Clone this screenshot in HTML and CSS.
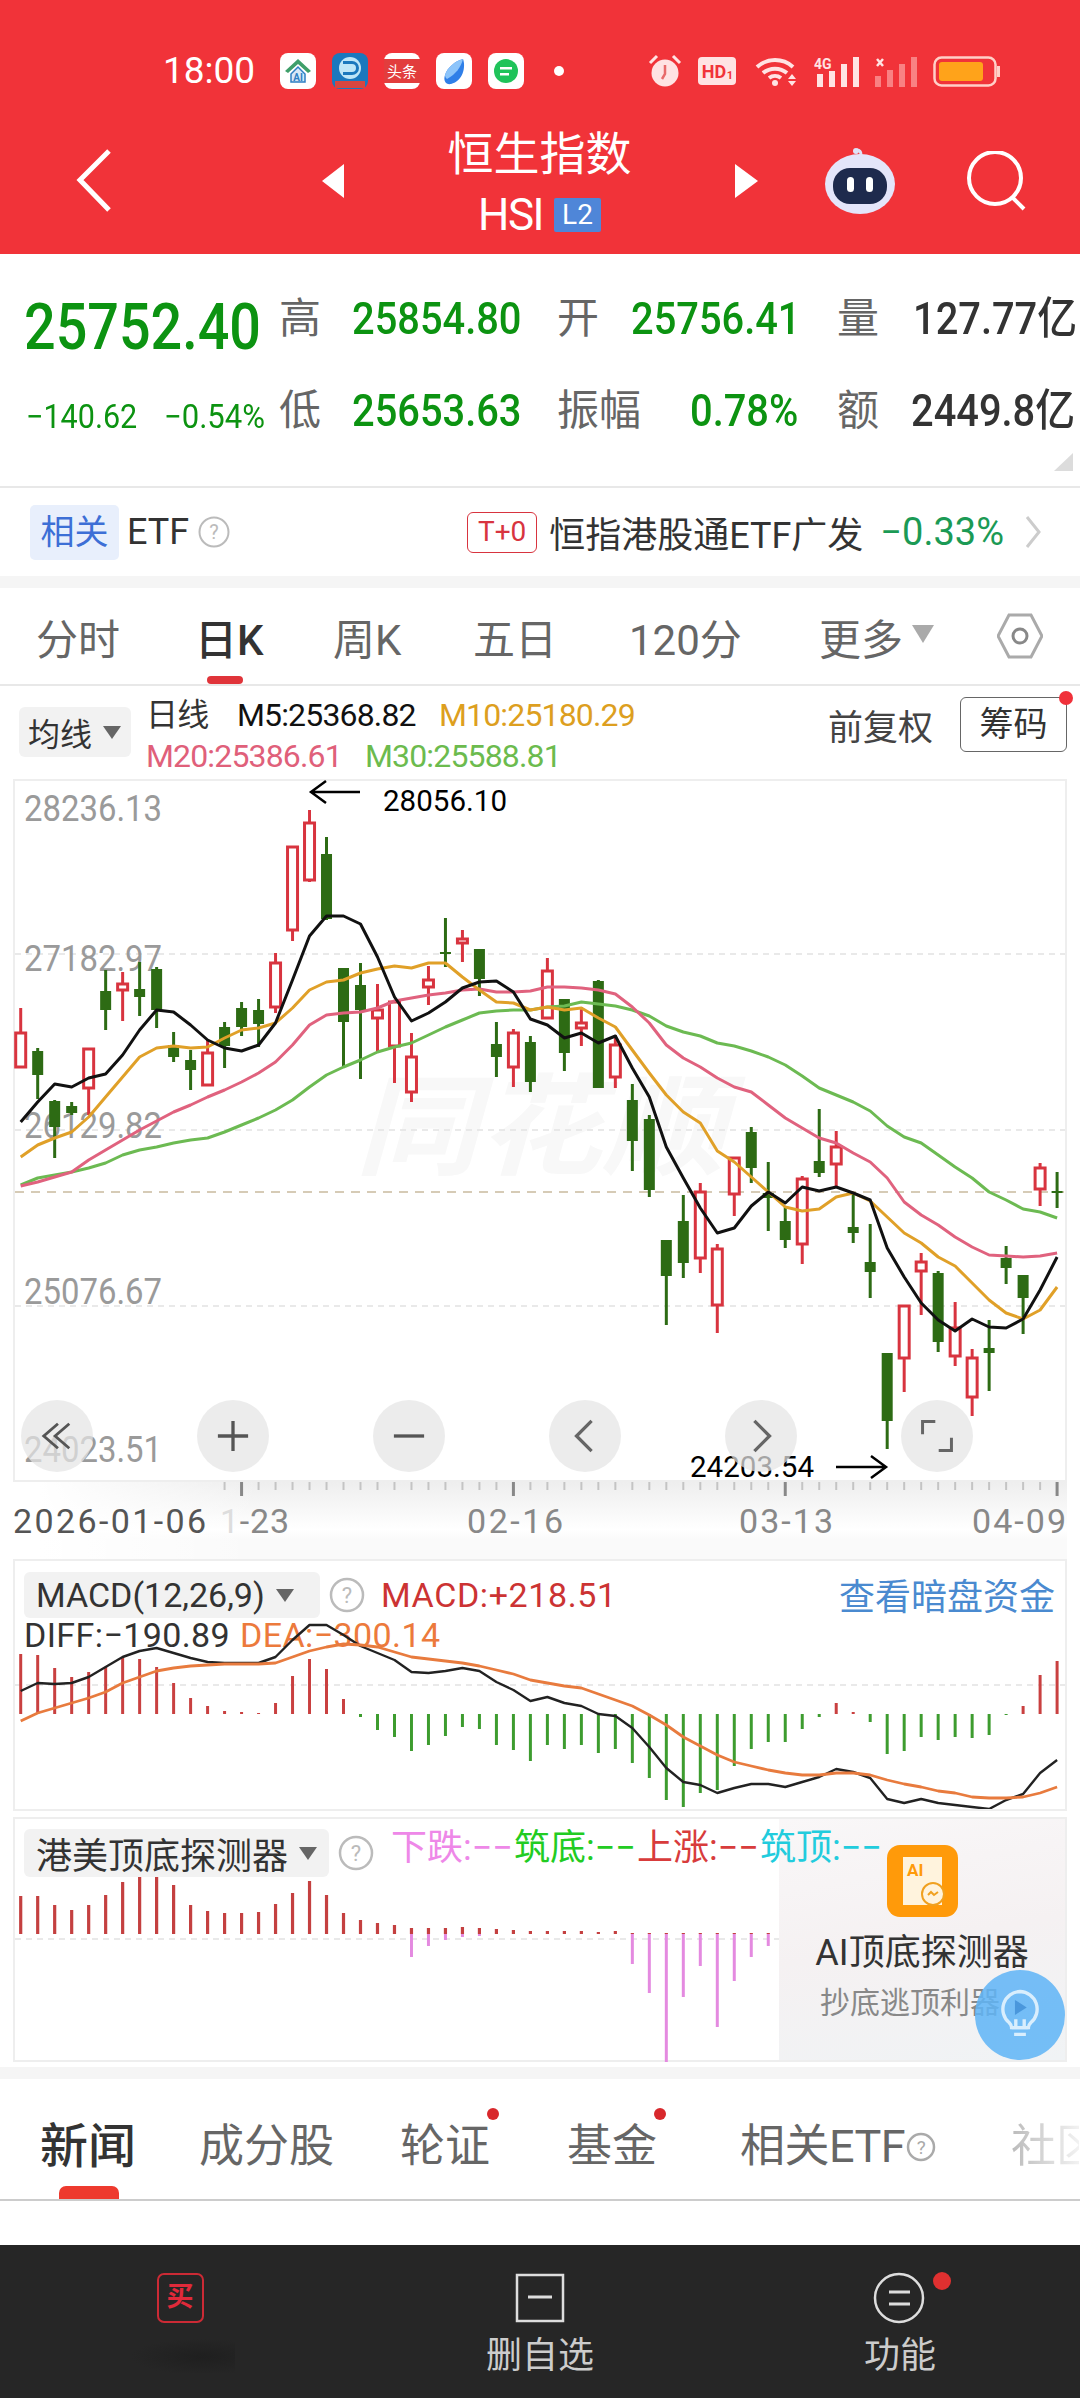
FILE: index.html
```html
<!DOCTYPE html>
<html lang="zh">
<head>
    <meta charset="UTF-8">
    <meta name="viewport" content="width=device-width, initial-scale=1.0">
    <title>恒生指数</title>
    <link rel="stylesheet" href="styles.css">
</head>
<body>
    <header class="top">
        <div class="status">
            <span class="time">18:00</span>
            <svg class="app" viewBox="0 0 36 36"><rect width="36" height="36" rx="8" fill="#fff"/><path d="M5 18 18 6l13 12-3 2-10-9-10 9z" fill="#3f9f6a"/><path d="M11 21l7-7 7 7v8H11z" fill="#d7e8f7" stroke="#2f7fc4" stroke-width="1.5"/><text x="18" y="28" font-size="10" font-weight="700" fill="#2f7fc4" text-anchor="middle">AI</text></svg>
            <svg class="app" viewBox="0 0 36 36"><rect width="36" height="36" rx="8" fill="#1b78bd"/><circle cx="18" cy="15" r="11" fill="#bfe6f7"/><path d="M11 8h9a7 7 0 0 1 0 14h-9v-3h9a4 4 0 0 0 0-8h-9z" fill="#1b78bd"/><rect x="3" y="28" width="30" height="7" fill="#d9453f"/></svg>
            <svg class="app" viewBox="0 0 36 36"><rect width="36" height="36" rx="8" fill="#fff"/><rect y="6" width="36" height="24" fill="#e23d3d"/><text x="18" y="24" font-size="15" fill="#fff" text-anchor="middle">头条</text></svg>
            <svg class="app" viewBox="0 0 36 36"><rect width="36" height="36" rx="8" fill="#fff"/><path d="M27 6c3 8 0 22-12 25-5 1-8-3-6-9C11 15 19 8 27 6z" fill="#2f7fe8"/><path d="M27 6c-2 8-7 15-16 20-1-1-2-2-2-4C11 15 19 8 27 6z" fill="#8cc4fa"/></svg>
            <svg class="app" viewBox="0 0 36 36"><rect width="36" height="36" rx="8" fill="#fff"/><circle cx="18" cy="18" r="12" fill="#1fc35a"/><rect x="12" y="14" width="12" height="2.5" fill="#fff"/><rect x="12" y="20" width="9" height="2.5" fill="#fff"/></svg>
            <i class="status-dot"></i>
            <svg class="st-alarm" viewBox="0 0 34 34"><circle cx="17" cy="19" r="13.5" fill="#ffe3e3"/><path d="M2 9 9 2M32 9 25 2" stroke="#ffe3e3" stroke-width="3"/><path d="M17 11v9l-3 5" stroke="#e86a6a" stroke-width="2.5" fill="none"/></svg>
            <svg class="st-hd" viewBox="0 0 38 28"><rect width="38" height="28" rx="4" fill="#ffe3e3"/><text x="16" y="21" font-size="18" font-weight="700" fill="#f13339" text-anchor="middle">HD</text><text x="32" y="22" font-size="11" font-weight="700" fill="#f13339" text-anchor="middle">1</text></svg>
            <svg class="st-wifi" viewBox="0 0 45 30"><path d="M2 11a27 27 0 0 1 36 0M8 17a19 19 0 0 1 24 0M14 22a10 10 0 0 1 12 0" fill="none" stroke="#ffe3e3" stroke-width="4"/><circle cx="20" cy="27" r="3" fill="#ffe3e3"/><path d="M37 18l4 5h-8zM33 25h8l-4 5z" fill="#ffe3e3"/></svg>
            <svg class="st-sig" viewBox="0 0 47 31"><text x="0" y="13" font-size="14" font-weight="700" fill="#ffe3e3">4G</text><g fill="#ffe3e3"><rect x="3" y="18" width="6" height="13"/><rect x="15" y="15" width="6" height="16"/><rect x="27" y="8" width="6" height="23"/><rect x="39" y="1" width="6" height="30"/></g></svg>
            <svg class="st-sig2" viewBox="0 0 44 31"><path d="M3 3l6 7M9 3l-6 7" stroke="#ffe3e3" stroke-width="2.5"/><g fill="#ffb5b5" opacity=".6"><rect x="1" y="20" width="6" height="11"/><rect x="13" y="14" width="6" height="17"/><rect x="25" y="8" width="6" height="23"/><rect x="37" y="1" width="6" height="30"/></g></svg>
            <svg class="st-batt" viewBox="0 0 67 31"><rect x="1.5" y="1.5" width="61" height="28" rx="7" fill="none" stroke="#ffd0c8" stroke-width="2.5"/><rect x="6" y="6" width="44" height="19" rx="3" fill="#ffa31a"/><rect x="64" y="10" width="3" height="11" fill="#ffd0c8"/></svg>
        </div>
        <nav class="nav">
            <svg class="back" viewBox="0 0 36 63"><path d="M33 2 4 31l29 30" fill="none" stroke="#fff" stroke-width="5"/></svg>
            <svg class="tri-l" viewBox="0 0 22 34"><path d="M22 0v34L0 17z" fill="#fff"/></svg>
            <div class="title">
                <div class="title-name">恒生指数</div>
                <div class="title-code"><span>HSI</span><b class="l2">L2</b></div>
            </div>
            <svg class="tri-r" viewBox="0 0 23 34"><path d="M0 0v34l23-17z" fill="#fff"/></svg>
            <svg class="robot" viewBox="0 0 70 66"><path d="M36 7c0-3-1-5-4-5" stroke="#dfe2f7" stroke-width="3" fill="none"/><circle cx="31" cy="3" r="3" fill="#dfe2f7"/><ellipse cx="35" cy="36" rx="35" ry="30" fill="#e4e5fa"/><rect x="8" y="20" width="54" height="36" rx="17" fill="#1e2a4d"/><rect x="22" y="29" width="7" height="15" rx="3.5" fill="#fff"/><rect x="41" y="29" width="7" height="15" rx="3.5" fill="#fff"/></svg>
            <svg class="search" viewBox="0 0 60 60"><circle cx="29" cy="27" r="26" fill="none" stroke="#fff" stroke-width="4"/><path d="M46 46l12 12" stroke="#fff" stroke-width="4"/></svg>
        </nav>
    </header>

    <section class="quote">
        <div class="price"><b class="squeeze-lg">25752.40</b></div>
        <span class="lab">高</span><span class="val squeeze">25854.80</span>
        <span class="lab">开</span><span class="val squeeze">25756.41</span>
        <span class="lab">量</span><span class="val dark squeeze">127.77亿</span>

        <div class="change"><span class="chg-abs">−140.62</span><span class="chg-pct">−0.54%</span></div>
        <span class="lab">低</span><span class="val squeeze">25653.63</span>
        <span class="lab">振幅</span><span class="val amp squeeze">0.78%</span>
        <span class="lab">额</span><span class="val dark total squeeze">2449.8亿</span>
        <svg class="corner" viewBox="0 0 19 18"><path d="M19 0v18H0z" fill="#dcdcdc"/></svg>
    </section>

    <section class="etf">
        <span class="etf-tag">相关</span>
        <span class="etf-label">ETF</span>
        <svg class="q q-etf" viewBox="0 0 32 32"><circle cx="16" cy="16" r="14.5" fill="none" stroke="#bbb" stroke-width="2"/><text x="16" y="23" font-size="20" fill="#bbb" text-anchor="middle">?</text></svg>
        <span class="etf-t0">T+0</span>
        <span class="etf-name">恒指港股通ETF广发</span>
        <span class="etf-pct">−0.33%</span>
        <svg class="etf-arrow" viewBox="0 0 16 32"><path d="M2 1l12 15L2 31" fill="none" stroke="#ccc" stroke-width="3"/></svg>
    </section>
    <div class="band"></div>

    <section class="periods">
        <span>分时</span>
        <span class="on">日K</span>
        <span>周K</span>
        <span>五日</span>
        <span>120分</span>
        <span class="more">更多<i class="caret caret-more"></i></span>
        <svg class="hex" viewBox="0 0 46 46"><path d="M12 2h22l11 21-11 21H12L1 23z" fill="none" stroke="#aaa" stroke-width="3"/><circle cx="23" cy="23" r="7" fill="none" stroke="#888" stroke-width="3"/></svg>
    </section>

    <section class="chart-head">
        <div class="chip chip-ma">均线<i class="caret"></i></div>
        <div class="legend">
            <div class="legend-row"><span class="lg-day">日线</span><span class="lg-m5">M5:25368.82</span><span class="lg-m10">M10:25180.29</span></div>
            <div class="legend-row"><span class="lg-m20">M20:25386.61</span><span class="lg-m30">M30:25588.81</span></div>
        </div>
        <span class="adjust">前复权</span>
        <span class="chips-btn">筹码</span>
    </section>

    <section class="box box-k">
        <svg id="kChart" class="k-svg" viewBox="15 781 1050 699" width="1050" height="699">
            <text class="watermark" x="355" y="1166" textLength="370" lengthAdjust="spacingAndGlyphs">同花顺</text>
            <g class="grid">
                <line x1="15" x2="1065" y1="954" y2="954"/>
                <line x1="15" x2="1065" y1="1130" y2="1130"/>
                <line x1="15" x2="1065" y1="1306" y2="1306"/>
            </g>
            <line class="last-close" x1="15" x2="1065" y1="1192" y2="1192"/>
            <g class="price-axis">
                <text x="24" y="821" textLength="138" lengthAdjust="spacingAndGlyphs">28236.13</text>
                <text x="24" y="971" textLength="138" lengthAdjust="spacingAndGlyphs">27182.97</text>
                <text x="24" y="1138" textLength="138" lengthAdjust="spacingAndGlyphs">26129.82</text>
                <text x="24" y="1304" textLength="138" lengthAdjust="spacingAndGlyphs">25076.67</text>
                <text x="24" y="1462" textLength="138" lengthAdjust="spacingAndGlyphs">24023.51</text>
            </g>
            <g id="kCandles"></g>
            <g class="marks">
                <path d="M360 792h-48m14-11-15 11 15 11" fill="none" stroke="#000" stroke-width="2.5"/>
                <text x="383" y="811" textLength="124" lengthAdjust="spacingAndGlyphs">28056.10</text>
                <text x="690" y="1477" textLength="124" lengthAdjust="spacingAndGlyphs">24203.54</text>
                <path d="M836 1467h50m-15-11 15 11-15 11" fill="none" stroke="#000" stroke-width="2.5"/>
            </g>
        </svg>
        <div class="zoom-btns">
            <span><svg viewBox="0 0 36 36"><path d="M19 5 4 18l15 13M31 5 16 18l15 13" fill="none" stroke="#555" stroke-width="3"/></svg></span>
            <span><svg viewBox="0 0 36 36"><path d="M18 2v32M2 18h32" fill="none" stroke="#555" stroke-width="3.5"/></svg></span>
            <span><svg viewBox="0 0 36 36"><path d="M2 18h32" fill="none" stroke="#555" stroke-width="3.5"/></svg></span>
            <span><svg viewBox="0 0 36 36"><path d="M25 2 9 18l16 16" fill="none" stroke="#666" stroke-width="3.5"/></svg></span>
            <span><svg viewBox="0 0 36 36"><path d="M11 2l16 16-16 16" fill="none" stroke="#666" stroke-width="3.5"/></svg></span>
            <span><svg viewBox="0 0 40 40"><path d="M18 3H3v15M22 37h15V22" fill="none" stroke="#666" stroke-width="3.5"/></svg></span>
        </div>
    </section>

    <section class="time-axis">
        <svg id="axis" viewBox="0 1482 1080 77" width="1080" height="77">
            <g id="axisTicks"></g>
            <text class="d-first" x="13" y="1533" textLength="193" lengthAdjust="spacing">2026-01-06</text>
            <text class="d-date" x="220" y="1533" textLength="69" lengthAdjust="spacing"><tspan class="d-fade">1</tspan>-23</text>
            <text class="d-date" x="467" y="1533" textLength="96" lengthAdjust="spacing">02-16</text>
            <text class="d-date" x="739" y="1533" textLength="94" lengthAdjust="spacing">03-13</text>
            <text class="d-date" x="972" y="1533" textLength="94" lengthAdjust="spacing">04-09</text>
        </svg>
    </section>

    <section class="box box-macd">
        <div class="ind-row">
            <div class="chip chip-macd">MACD(12,26,9)<i class="caret"></i></div>
            <svg class="q q-ind" viewBox="0 0 36 36"><circle cx="18" cy="18" r="16" fill="none" stroke="#bbb" stroke-width="2.5"/><text x="18" y="26" font-size="22" fill="#bbb" text-anchor="middle">?</text></svg>
            <span class="macd-val">MACD:+218.51</span>
            <span class="dark-pool">查看暗盘资金</span>
        </div>
        <div class="diff-row"><span class="diff">DIFF:−190.89</span><span class="dea">DEA:−300.14</span></div>
        <svg id="macdChart" class="over-svg" viewBox="15 1561 1050 248" width="1050" height="248">
            <line class="grid-line" x1="15" x2="1065" y1="1685" y2="1685"/>
            <g id="macdBars"></g>
        </svg>
    </section>

    <section class="box box-ai">
        <svg id="aiChart" class="over-svg" viewBox="15 1819 1050 243" width="1050" height="243">
            <line class="grid-line" x1="15" x2="1065" y1="1939" y2="1939"/>
            <g id="aiBars"></g>
        </svg>
        <div class="ind-row ind-row-ai">
            <div class="chip chip-ai">港美顶底探测器<i class="caret"></i></div>
            <svg class="q q-ind" viewBox="0 0 36 36"><circle cx="18" cy="18" r="16" fill="none" stroke="#bbb" stroke-width="2.5"/><text x="18" y="26" font-size="22" fill="#bbb" text-anchor="middle">?</text></svg>
            <div class="signals">
                <span class="s-pink">下跌:−−</span>
                <span class="s-green">筑底:−−</span>
                <span class="s-red">上涨:−−</span>
                <span class="s-cyan">筑顶:−−</span>
            </div>
        </div>
        <div class="ai-card">
            <svg class="ai-icon" viewBox="0 0 71 72">
                <rect width="71" height="72" rx="13" fill="#ff9a0a"/>
                <rect x="16" y="12" width="39" height="48" fill="#fff3dd"/>
                <text x="20" y="31" font-size="17" font-weight="700" fill="#ff9a0a">AI</text>
                <circle cx="46" cy="49" r="11" fill="#fff3dd" stroke="#f0a020" stroke-width="2"/>
                <path d="M41 50l3-3 3 3 4-3" fill="none" stroke="#f0a020" stroke-width="2"/>
            </svg>
            <div class="ai-name">AI顶底探测器</div>
            <div class="ai-sub">抄底逃顶利器</div>
        </div>
        <div class="bulb">
            <svg viewBox="0 0 50 62"><path d="M25 3a21 21 0 0 0-13 37c2 2 3 3 3 6h20c0-3 1-4 3-6A21 21 0 0 0 25 3z" fill="none" stroke="#d9eefd" stroke-width="4"/><path d="M15 46h20M20 46V36M30 46V36M18 54h14" stroke="#d9eefd" stroke-width="4" fill="none"/><path d="M19 13l14 9-14 9z" fill="#4a97dc"/></svg>
        </div>
    </section>

    <div class="band band-low"></div>

    <section class="news-tabs">
        <span class="on">新闻</span>
        <span>成分股</span>
        <span class="dot">轮证</span>
        <span class="dot">基金</span>
        <span class="etf-tab">相关ETF<svg class="q q-tab" viewBox="0 0 30 30"><circle cx="15" cy="15" r="13" fill="none" stroke="#aaa" stroke-width="2.5"/><text x="15" y="22" font-size="19" fill="#aaa" text-anchor="middle">?</text></svg></span>
        <span class="fade">社区</span>
    </section>
    <div class="spacer"></div>

    <footer class="bar">
        <div class="bar-item">
            <span class="buy-icon">买</span>
            <i class="smudge"></i>
        </div>
        <div class="bar-item">
            <svg class="bar-icon" viewBox="0 0 50 50"><rect x="2" y="2" width="46" height="46" fill="none" stroke="#ddd" stroke-width="2.5"/><path d="M13 24h24" stroke="#ddd" stroke-width="3"/></svg>
            <span class="bar-label">删自选</span>
        </div>
        <div class="bar-item">
            <svg class="bar-icon bar-icon-round" viewBox="0 0 80 52"><circle cx="27" cy="26" r="24" fill="none" stroke="#ddd" stroke-width="2.5"/><path d="M17 20h21M17 32h21" stroke="#ddd" stroke-width="3"/><circle cx="70" cy="9" r="9" fill="#e03030"/></svg>
            <span class="bar-label">功能</span>
        </div>
    </footer>

    <script src="chart.js"></script>
</body>
</html>
```

FILE: styles.css
```css
* {
    box-sizing: border-box;
}
body {
    margin: 0;
    width: 1080px;
    height: 2400px;
    overflow: hidden;
    background: #fff;
    color: #333;
    font-family: Roboto, "Noto Sans CJK SC", sans-serif;
}
svg {
    display: block;
    flex: none;
}
i {
    font-style: normal;
}

/* top red header */
.top {
    height: 254px;
    background: #f13339;
    color: #fff;
}
.status {
    display: flex;
    align-items: center;
    height: 89px;
    padding: 53px 0 0 163px;
}
.time {
    width: 117px;
    font-size: 37px;
    line-height: 36px;
}
.app {
    width: 36px;
    height: 36px;
    margin-right: 16px;
}
.status-dot {
    width: 10px;
    height: 10px;
    margin-left: 14px;
    border-radius: 50%;
    background: #fff;
}
.st-alarm {
    width: 34px;
    height: 34px;
    margin-left: 84px;
}
.st-hd {
    width: 38px;
    height: 28px;
    margin-left: 16px;
}
.st-wifi {
    width: 45px;
    height: 30px;
    margin-left: 19px;
}
.st-sig {
    width: 47px;
    height: 31px;
    margin-left: 14px;
}
.st-sig2 {
    width: 44px;
    height: 31px;
    margin-left: 13px;
}
.st-batt {
    width: 67px;
    height: 31px;
    margin-left: 15px;
}
.nav {
    display: flex;
    align-items: center;
    height: 165px;
    padding: 18px 0 0 76px;
}
.back {
    width: 36px;
    height: 63px;
}
.tri-l {
    width: 22px;
    height: 34px;
    margin-left: 210px;
}
.tri-r {
    width: 23px;
    height: 34px;
}
.title {
    width: 391px;
    padding-top: 4px;
    text-align: center;
}
.title-name {
    font-size: 46px;
    line-height: 56px;
}
.title-code {
    display: flex;
    justify-content: center;
    align-items: center;
    gap: 11px;
    height: 50px;
    margin-top: 8px;
    font-size: 44px;
    line-height: 50px;
    letter-spacing: -1.5px;
}
.l2 {
    width: 47px;
    height: 34px;
    background: #4f86d8;
    border-radius: 2px;
    font-size: 28px;
    font-weight: 400;
    line-height: 34px;
    letter-spacing: 0;
}
.robot {
    width: 70px;
    height: 66px;
    margin-left: 67px;
}
.search {
    width: 60px;
    height: 60px;
    margin-left: 71px;
}

/* quote numbers */
.quote {
    position: relative;
    display: grid;
    grid-template-columns: 255px 72px 206px 73px 207px 75px 166px;
    grid-auto-rows: 92px;
    align-items: center;
    height: 234px;
    padding: 19px 0 0 24px;
    border-bottom: 2px solid #e8e8e8;
    white-space: nowrap;
}
.price {
    margin-top: 18px;
    color: #0c9311;
    font-size: 64px;
    line-height: 70px;
}
.squeeze-lg {
    display: inline-block;
    transform: scaleX(.87);
    transform-origin: left;
    font-weight: 500;
}
.squeeze {
    display: inline-block;
    transform: scaleX(.905);
    transform-origin: left;
}
.lab {
    color: #666;
    font-size: 42px;
    line-height: 48px;
}
.val {
    margin-left: 1px;
    color: #0c9311;
    font-size: 44px;
    font-weight: 500;
    line-height: 48px;
}
.dark {
    color: #333;
}
.amp {
    margin-left: 60px;
}
.total {
    margin-left: -1px;
}
.change {
    display: flex;
    margin: 12px 0 0 2px;
    color: #0c9311;
    font-size: 33px;
    line-height: 40px;
}
.change span {
    display: inline-block;
    transform-origin: left;
}
.chg-abs {
    width: 138px;
    transform: scaleX(.925);
}
.chg-pct {
    transform: scaleX(.94);
}
.corner {
    position: absolute;
    right: 7px;
    bottom: 15px;
    width: 19px;
    height: 18px;
}

/* related etf row */
.etf {
    display: flex;
    align-items: center;
    height: 88px;
    padding-left: 30px;
    white-space: nowrap;
}
.etf-tag {
    width: 89px;
    height: 55px;
    background: #e8effc;
    border-radius: 5px;
    color: #3d6fd6;
    font-size: 34px;
    line-height: 55px;
    text-align: center;
}
.etf-label {
    margin-left: 8px;
    font-size: 36px;
}
.q-etf {
    width: 32px;
    height: 32px;
    margin-left: 9px;
}
.etf-t0 {
    width: 70px;
    height: 41px;
    margin-left: auto;
    border: 1.5px solid #d8343f;
    border-radius: 6px;
    color: #d8343f;
    font-size: 28px;
    line-height: 38px;
    text-align: center;
}
.etf-name {
    margin-left: 12px;
    font-size: 36px;
}
.etf-pct {
    margin-left: 17px;
    color: #1b9a55;
    font-size: 38px;
}
.etf-arrow {
    width: 16px;
    height: 32px;
    margin: 0 39px 0 21px;
}
.band {
    height: 12px;
    background: #f5f5f5;
}

/* period tabs */
.periods {
    display: grid;
    grid-template-columns: 159px 138px 140px 156px 190px 177px 46px;
    align-items: center;
    height: 98px;
    padding-left: 36px;
    border-bottom: 2px solid #e8e8e8;
    color: #666;
    font-size: 42px;
    white-space: nowrap;
}
.periods span {
    position: relative;
    display: flex;
    align-items: center;
    height: 100%;
}
.periods .on {
    color: #333;
    font-weight: 500;
}
.periods .on::after {
    content: "";
    position: absolute;
    left: 12px;
    bottom: 0;
    width: 36px;
    height: 8px;
    border-radius: 4px;
    background: #e0343a;
}
.caret {
    display: inline-block;
    width: 0;
    height: 0;
    margin-left: 11px;
    border-top: 13px solid #666;
    border-left: 9px solid transparent;
    border-right: 9px solid transparent;
}
.caret-more {
    margin-top: -5px;
    margin-left: 9px;
    border-top: 18px solid #aaa;
    border-left-width: 11px;
    border-right-width: 11px;
}
.hex {
    width: 46px;
    height: 46px;
    margin-left: 1px;
}

/* chart header */
.chart-head {
    display: flex;
    height: 93px;
    padding: 21px 13px 0 19px;
    white-space: nowrap;
}
.chip {
    display: flex;
    align-items: center;
    background: #f2f2f2;
    border-radius: 6px;
    color: #333;
}
.chip-ma {
    width: 112px;
    height: 50px;
    padding-left: 9px;
    font-size: 32px;
}
.legend {
    margin: -12px 0 0 15px;
    font-size: 32px;
    letter-spacing: -.85px;
    line-height: 41px;
}
.legend-row {
    display: flex;
}
.lg-day {
    width: 91px;
    color: #333;
}
.lg-m5 {
    width: 202px;
    color: #111;
}
.lg-m10 {
    color: #dd9f1f;
}
.lg-m20 {
    width: 219px;
    color: #e0607a;
}
.lg-m30 {
    color: #6cbb4e;
}
.adjust {
    margin: -3px 0 0 auto;
    color: #444;
    font-size: 35px;
    line-height: 50px;
}
.chips-btn {
    position: relative;
    width: 107px;
    height: 55px;
    margin: -10px 0 0 27px;
    border: 1.5px solid #666;
    border-radius: 6px;
    font-size: 34px;
    line-height: 52px;
    text-align: center;
}
.chips-btn::after {
    content: "";
    position: absolute;
    top: -7px;
    right: -7px;
    width: 14px;
    height: 14px;
    border-radius: 50%;
    background: #f0313a;
}

/* chart boxes */
.box {
    position: relative;
    width: 1054px;
    margin-left: 13px;
    border: 2px solid #eee;
}
.box-k {
    height: 703px;
}
.k-svg {
    overflow: visible;
}
.k-svg text {
    font-family: Roboto, "Noto Sans CJK SC", sans-serif;
}
.watermark {
    fill: #f8f8f8;
    font-size: 110px;
    font-weight: 700;
    font-style: italic;
}
.grid line, .grid-line {
    stroke: #e2e2e2;
    stroke-width: 1.5;
    stroke-dasharray: 6 5;
}
.last-close {
    stroke: #c9bb9f;
    stroke-width: 1.5;
    stroke-dasharray: 9 7;
}
.price-axis text {
    fill: #9a9a9a;
    font-size: 36px;
}
.marks text {
    fill: #000;
    font-size: 30px;
}
.zoom-btns {
    position: absolute;
    left: 6px;
    top: 619px;
    display: flex;
    gap: 104px;
}
.zoom-btns span {
    display: flex;
    align-items: center;
    justify-content: center;
    width: 72px;
    height: 72px;
    border-radius: 50%;
    background: rgba(229, 229, 229, .72);
}
.zoom-btns svg {
    width: 34px;
    height: 34px;
}
.time-axis {
    height: 77px;
    background:
        linear-gradient(270deg, #fff 13px, transparent 13px),
        linear-gradient(90deg, #fff 40px, transparent 260px),
        linear-gradient(#eee, #fff 62%, #fafafa 75%);
}
#axis text {
    font-size: 34px;
}
.d-first {
    fill: #555;
}
.d-date {
    fill: #888;
}
.d-fade {
    fill: #ddd;
}
.box-macd {
    height: 252px;
}
.box-ai {
    height: 245px;
    margin-top: 6px;
}
.over-svg {
    position: absolute;
    left: 0;
    top: 0;
    z-index: 1;
    pointer-events: none;
}
.ind-row {
    display: flex;
    align-items: center;
    height: 57px;
    padding: 11px 0 0 9px;
    white-space: nowrap;
}
.chip-macd {
    width: 296px;
    height: 46px;
    padding-left: 12px;
    font-size: 34px;
}
.chip-macd .caret, .chip-ai .caret {
    border-top-color: #666;
}
.q-ind {
    width: 36px;
    height: 36px;
    margin-left: 9px;
}
.macd-val {
    margin-left: 16px;
    color: #cc3333;
    font-size: 34px;
    letter-spacing: .6px;
}
.dark-pool {
    margin: -2px 0 0 auto;
    padding-right: 10px;
    color: #4a8ad0;
    font-size: 36px;
}
.diff-row {
    display: flex;
    height: 34px;
    padding-left: 9px;
    font-size: 34px;
    line-height: 34px;
    letter-spacing: .4px;
    white-space: nowrap;
}
.diff {
    width: 216px;
}
.dea {
    color: #ec7a3c;
}

/* ai detector panel */
.ind-row-ai {
    position: relative;
    z-index: 2;
    padding-top: 10px;
    height: 58px;
}
.chip-ai {
    width: 305px;
    height: 48px;
    padding-left: 12px;
    font-size: 36px;
}
.signals {
    display: flex;
    margin: -10px 0 0 17px;
    font-size: 36px;
    line-height: 44px;
}
.signals span {
    width: 123px;
}
.s-pink {
    color: #ee88e8;
}
.s-green {
    color: #22cc22;
}
.s-red {
    color: #d83c3c;
}
.s-cyan {
    color: #22ccdd;
}
.ai-card {
    position: absolute;
    top: 0;
    right: 0;
    bottom: 0;
    z-index: 1;
    display: flex;
    flex-direction: column;
    align-items: center;
    width: 286px;
    padding-top: 26px;
    background: linear-gradient(170deg, #f9f7f8, #f5f1f2 50%, #f0f3f5);
}
.ai-icon {
    width: 71px;
    height: 72px;
}
.ai-name {
    margin-top: 16px;
    color: #333;
    font-size: 36px;
    line-height: 40px;
}
.ai-sub {
    margin: 12px 24px 0 0;
    color: #888;
    font-size: 30px;
    line-height: 36px;
}
.bulb {
    position: absolute;
    right: 0;
    bottom: 0;
    z-index: 3;
    display: flex;
    align-items: center;
    justify-content: center;
    width: 90px;
    height: 90px;
    border-radius: 50%;
    background: rgba(96, 180, 246, .86);
}
.bulb svg {
    width: 42px;
    height: 54px;
}
.band-low {
    margin-top: 5px;
}

/* news tabs */
.news-tabs {
    display: grid;
    grid-template-columns: 159px 201px 167px 173px 271px 68px;
    align-items: center;
    height: 122px;
    padding: 16px 0 0 40px;
    border-bottom: 2px solid #ccc;
    overflow: hidden;
    color: #666;
    font-size: 45px;
    line-height: 60px;
    white-space: nowrap;
}
.news-tabs span {
    position: relative;
    display: flex;
    align-items: center;
}
.news-tabs .on {
    color: #333;
    font-size: 48px;
    font-weight: 500;
}
.news-tabs .on::after {
    content: "";
    position: absolute;
    left: 19px;
    bottom: -22px;
    width: 60px;
    height: 13px;
    border-radius: 7px 7px 0 0;
    background: #ee3a2e;
}
.news-tabs .dot::after {
    content: "";
    position: absolute;
    top: -9px;
    left: 87px;
    width: 12px;
    height: 12px;
    border-radius: 50%;
    background: #d8282c;
}
.etf-tab {
    letter-spacing: -.5px;
}
.q-tab {
    width: 30px;
    height: 30px;
    margin-left: 1px;
}
.news-tabs .fade {
    background: linear-gradient(90deg, #bbb, #f2f2f2);
    -webkit-background-clip: text;
    background-clip: text;
    color: transparent;
}
.spacer {
    height: 44px;
}

/* bottom bar */
.bar {
    display: grid;
    grid-template-columns: repeat(3, 360px);
    height: 153px;
    background: #262626;
}
.bar-item {
    display: flex;
    flex-direction: column;
    align-items: center;
    padding-top: 28px;
}
.bar-icon {
    width: 50px;
    height: 50px;
}
.bar-icon-round {
    width: 80px;
    height: 52px;
    margin: -1px 0 -1px 24px;
}
.bar-label {
    margin-top: 13px;
    color: #ccc;
    font-size: 36px;
    line-height: 40px;
}
.buy-icon {
    width: 47px;
    height: 50px;
    border: 2.5px solid #cc2a35;
    border-radius: 7px;
    color: #e02a3a;
    font-size: 27px;
    font-weight: 700;
    line-height: 44px;
    text-align: center;
}
.smudge {
    width: 110px;
    height: 36px;
    margin-top: 14px;
    background: radial-gradient(ellipse at 70% 55%, #1f1f1f, #262626 65%);
}
```

FILE: chart.js
```js
// daily candles, values are pixel rows in the 1080x2400 page: type, high, top, bottom, low
const candles = [
    ['r',1008,1033,1067,1067],['g',1048,1051,1075,1099],['g',1100,1101,1127,1158],['g',1102,1106,1113,1115],
    ['r',1049,1049,1088,1115],['g',970,991,1010,1030],['r',972,984,990,1021],['g',962,989,997,1016],
    ['g',967,969,1010,1028],['g',1032,1045,1057,1062],['g',1050,1060,1070,1090],['r',1040,1053,1085,1085],
    ['g',1022,1027,1046,1068],['g',1002,1008,1027,1036],['g',999,1010,1024,1047],['r',953,963,1007,1013],
    ['r',847,847,930,941],['r',810,823,880,882],['g',837,854,919,920],['g',968,968,1022,1067],
    ['g',963,985,1010,1079],['r',984,1010,1018,1052],['r',1000,1002,1046,1083],['r',1033,1057,1092,1102],
    ['r',966,980,987,1005],['g',918,952,954,967],['r',930,939,943,962],['g',949,949,979,996],
    ['g',1022,1044,1057,1077],['r',1029,1033,1067,1087],['g',1036,1042,1082,1092],['r',958,971,1018,1018],
    ['g',999,999,1053,1071],['r',1007,1023,1028,1046],['g',980,981,1088,1088],['r',1035,1045,1077,1088],
    ['g',1084,1100,1141,1171],['g',1115,1119,1190,1197],['g',1240,1240,1276,1325],['g',1195,1221,1263,1278],
    ['r',1183,1192,1258,1273],['r',1244,1249,1305,1333],['r',1158,1158,1194,1216],['g',1127,1132,1168,1183],
    ['g',1162,1193,1198,1231],['g',1207,1221,1240,1248],['r',1176,1179,1244,1264],['g',1109,1161,1173,1177],
    ['r',1131,1147,1164,1187],['g',1193,1227,1233,1243],['g',1224,1262,1272,1298],['g',1353,1353,1421,1449],
    ['r',1306,1306,1358,1392],['r',1253,1262,1271,1315],['g',1271,1273,1342,1352],['r',1302,1328,1356,1366],
    ['r',1349,1358,1397,1416],['g',1320,1348,1353,1391],['g',1246,1258,1268,1284],['g',1275,1275,1298,1334],
    ['r',1163,1168,1189,1206],['g',1172,1191,1193,1208]
];
const ma5 = [1122,1102,1084,1087,1078,1074,1055,1030,1010,1012,1025,1040,1048,1051,1045,1023,980,936,916,916,924,957,997,1021,1013,1002,988,982,981,992,1019,1025,1038,1033,1043,1036,1068,1097,1147,1178,1208,1233,1228,1206,1192,1203,1187,1191,1187,1193,1200,1248,1277,1303,1320,1331,1319,1327,1328,1319,1290,1257];
const ma10 = [1157,1145,1138,1132,1117,1097,1077,1057,1048,1046,1048,1047,1038,1030,1028,1023,1008,990,982,980,973,969,966,968,963,963,977,990,1002,1003,1010,1007,1010,1008,1018,1027,1050,1073,1095,1112,1123,1151,1162,1177,1192,1207,1211,1209,1197,1193,1201,1217,1233,1243,1257,1266,1283,1300,1313,1319,1310,1287];
const ma20 = [1186,1182,1177,1172,1160,1150,1140,1130,1121,1112,1105,1097,1090,1082,1073,1062,1045,1025,1015,1013,1012,1008,1001,998,995,993,990,989,992,992,991,987,987,988,990,994,1007,1023,1045,1058,1067,1078,1087,1092,1105,1118,1128,1138,1143,1153,1162,1178,1202,1215,1225,1237,1247,1255,1256,1257,1256,1253];
const ma30 = [1185,1178,1175,1172,1168,1163,1155,1150,1147,1143,1140,1138,1132,1125,1118,1110,1100,1087,1075,1067,1060,1052,1047,1043,1035,1027,1020,1013,1011,1010,1010,1007,1006,1002,1004,1006,1010,1016,1026,1032,1036,1043,1046,1051,1057,1065,1076,1088,1095,1102,1111,1126,1137,1143,1155,1167,1178,1192,1200,1209,1212,1218];

const macdHist = [60,59,46,37,42,47,57,55,47,31,16,8,3,2,1,11,38,55,45,15,-3,-16,-23,-37,-31,-22,-13,-15,-31,-36,-47,-31,-35,-31,-39,-35,-49,-64,-86,-93,-79,-76,-52,-35,-28,-28,-15,-3,11,2,-8,-40,-37,-23,-26,-23,-24,-21,-1,8,39,53];
const diff = [1691,1683,1684,1683,1677,1667,1657,1651,1648,1653,1658,1662,1663,1663,1663,1657,1640,1625,1625,1635,1646,1653,1660,1672,1673,1671,1668,1671,1682,1690,1701,1697,1703,1706,1714,1716,1728,1747,1768,1782,1785,1793,1788,1784,1784,1787,1782,1777,1769,1772,1778,1799,1803,1799,1803,1805,1807,1809,1800,1794,1773,1760];
const dea = [1721,1713,1708,1703,1698,1692,1683,1677,1671,1668,1666,1665,1664,1664,1664,1663,1657,1651,1647,1644,1645,1647,1652,1657,1659,1661,1663,1666,1670,1674,1680,1683,1686,1688,1694,1700,1706,1715,1725,1737,1746,1755,1762,1766,1770,1773,1775,1775,1773,1773,1775,1780,1784,1787,1791,1793,1797,1798,1798,1797,1793,1787];

// detector bars: red height above 1934, pink bottom row below it
const aiRed = [38,38,29,24,29,39,52,61,63,49,29,23,21,21,22,30,41,53,39,21,14,11,9,6,6,6,7,6,5,4,3,3,3,3,2,3,1,1,1,1,1,1,1,1,1];
const aiPink = {23:1957,24:1946,25:1940,26:1937,27:1936,36:1964,37:1993,38:2063,39:1997,40:1966,41:2027,42:1981,43:1957,44:1946};

const NS = 'http://www.w3.org/2000/svg';
const RED = '#d8343f';
const GREEN = '#2d6b14';

function xAt(i) {
    return 20.7 + i * 16.99;
}

function add(parent, tag, attrs) {
    const node = document.createElementNS(NS, tag);
    Object.keys(attrs).forEach(k => node.setAttribute(k, attrs[k]));
    parent.appendChild(node);
    return node;
}

function drawLine(parent, ys, color, width) {
    const points = ys.map((y, i) => xAt(i).toFixed(1) + ',' + y).join(' ');
    add(parent, 'polyline', {points: points, fill: 'none', stroke: color, 'stroke-width': width, 'stroke-linejoin': 'round'});
}

const kGroup = document.getElementById('kCandles');
candles.forEach((c, i) => {
    const x = xAt(i);
    const color = c[0] === 'r' ? RED : GREEN;
    add(kGroup, 'line', {x1: x, x2: x, y1: c[1], y2: c[4], stroke: color, 'stroke-width': 3});
    if (c[0] === 'r') {
        add(kGroup, 'rect', {x: x - 5, y: c[2], width: 10, height: Math.max(c[3] - c[2], 3), fill: '#fff', stroke: color, 'stroke-width': 3});
    } else {
        add(kGroup, 'rect', {x: x - 5.5, y: c[2], width: 11, height: Math.max(c[3] - c[2], 2), fill: color});
    }
});
drawLine(kGroup, ma30, '#6cba52', 3);
drawLine(kGroup, ma20, '#e0627e', 3);
drawLine(kGroup, ma10, '#e0a028', 3);
drawLine(kGroup, ma5, '#111', 3);

const ticks = document.getElementById('axisTicks');
candles.forEach((c, i) => {
    if (i < 12) return;
    const big = (i - 13) % 16 === 0;
    add(ticks, 'line', {
        x1: xAt(i), x2: xAt(i), y1: 1482, y2: big ? 1496 : 1490,
        stroke: big ? '#888' : '#c4c4c4',
        'stroke-width': big ? 3 : 2
    });
});

const macdGroup = document.getElementById('macdBars');
macdHist.forEach((v, i) => {
    const x = xAt(i);
    add(macdGroup, 'line', {x1: x, x2: x, y1: 1714, y2: 1714 - v, stroke: v >= 0 ? '#c94040' : '#3d9c2f', 'stroke-width': 3});
});
drawLine(macdGroup, diff, '#222', 2.4);
drawLine(macdGroup, dea, '#e87b3e', 2.8);

const aiGroup = document.getElementById('aiBars');
aiRed.forEach((h, i) => {
    const x = xAt(i);
    if (aiPink[i]) {
        add(aiGroup, 'line', {x1: x, x2: x, y1: 1934, y2: aiPink[i], stroke: '#e48ae0', 'stroke-width': 3});
    }
    add(aiGroup, 'line', {x1: x, x2: x, y1: 1934 - h, y2: 1934, stroke: '#c44040', 'stroke-width': 3.2});
});
```
